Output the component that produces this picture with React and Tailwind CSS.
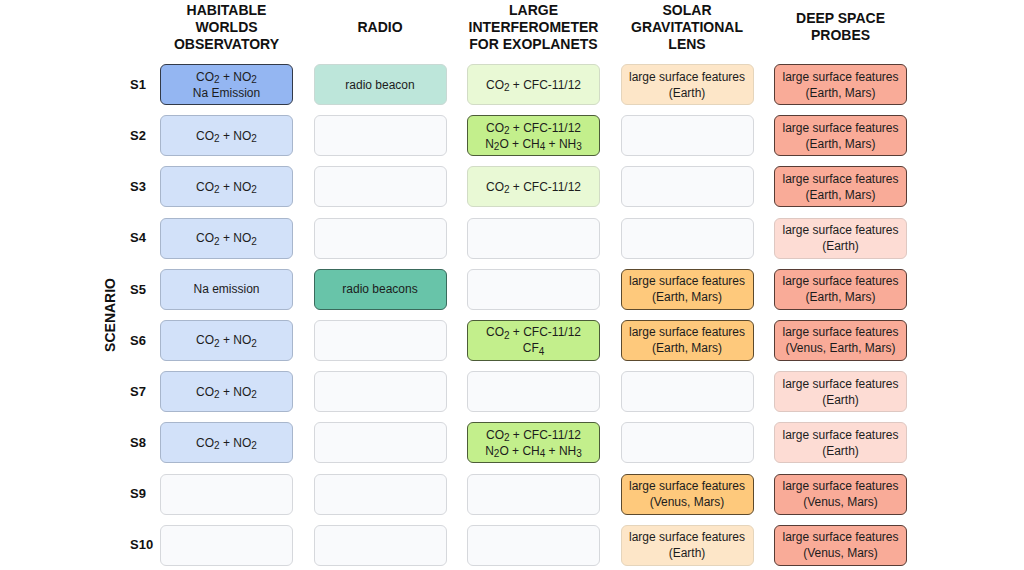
import React from 'react'

// paleta por columna: claro / fuerte / vacío
const estilos = {
  vacio: 'bg-[#f9fafc] border-[#d6d8dc]',
  hwoL: 'bg-[#d2e1f9] border-[#a8b6cc]',
  hwoF: 'bg-[#94b6f2] border-[#333a48]',
  radL: 'bg-[#bde6da] border-[#c9d9d4]',
  radF: 'bg-[#68c4a9] border-[#3a6a5c]',
  lifeL: 'bg-[#e9f9d5] border-[#d2dcc6]',
  lifeF: 'bg-[#c3ef8c] border-[#4c5c38]',
  sglL: 'bg-[#fde6c8] border-[#e5d5bc]',
  sglF: 'bg-[#fec97c] border-[#5c4a2e]',
  dspL: 'bg-[#fddcd4] border-[#dec8c2]',
  dspF: 'bg-[#f9ab98] border-[#573c35]',
}

const Sub = ({ children }) => <sub className="text-[10px]">{children}</sub>

const co2no2 = <>CO<Sub>2</Sub> + NO<Sub>2</Sub></>
const co2cfc = <>CO<Sub>2</Sub> + CFC-11/12</>
const n2o = <>N<Sub>2</Sub>O + CH<Sub>4</Sub> + NH<Sub>3</Sub></>
const lsf = 'large surface features'

const filas = [
  ['S1', [
    ['hwoF', [co2no2, 'Na Emission']],
    ['radL', ['radio beacon']],
    ['lifeL', [co2cfc]],
    ['sglL', [lsf, '(Earth)']],
    ['dspF', [lsf, '(Earth, Mars)']],
  ]],
  ['S2', [
    ['hwoL', [co2no2]],
    ['vacio', []],
    ['lifeF', [co2cfc, n2o]],
    ['vacio', []],
    ['dspF', [lsf, '(Earth, Mars)']],
  ]],
  ['S3', [
    ['hwoL', [co2no2]],
    ['vacio', []],
    ['lifeL', [co2cfc]],
    ['vacio', []],
    ['dspF', [lsf, '(Earth, Mars)']],
  ]],
  ['S4', [
    ['hwoL', [co2no2]],
    ['vacio', []],
    ['vacio', []],
    ['vacio', []],
    ['dspL', [lsf, '(Earth)']],
  ]],
  ['S5', [
    ['hwoL', ['Na emission']],
    ['radF', ['radio beacons']],
    ['vacio', []],
    ['sglF', [lsf, '(Earth, Mars)']],
    ['dspF', [lsf, '(Earth, Mars)']],
  ]],
  ['S6', [
    ['hwoL', [co2no2]],
    ['vacio', []],
    ['lifeF', [co2cfc, <>CF<Sub>4</Sub></>]],
    ['sglF', [lsf, '(Earth, Mars)']],
    ['dspF', [lsf, '(Venus, Earth, Mars)']],
  ]],
  ['S7', [
    ['hwoL', [co2no2]],
    ['vacio', []],
    ['vacio', []],
    ['vacio', []],
    ['dspL', [lsf, '(Earth)']],
  ]],
  ['S8', [
    ['hwoL', [co2no2]],
    ['vacio', []],
    ['lifeF', [co2cfc, n2o]],
    ['vacio', []],
    ['dspL', [lsf, '(Earth)']],
  ]],
  ['S9', [
    ['vacio', []],
    ['vacio', []],
    ['vacio', []],
    ['sglF', [lsf, '(Venus, Mars)']],
    ['dspF', [lsf, '(Venus, Mars)']],
  ]],
  ['S10', [
    ['vacio', []],
    ['vacio', []],
    ['vacio', []],
    ['sglL', [lsf, '(Earth)']],
    ['dspF', [lsf, '(Venus, Mars)']],
  ]],
]

const encabezados = [
  ['HABITABLE', 'WORLDS', 'OBSERVATORY'],
  ['RADIO'],
  ['LARGE', 'INTERFEROMETER', 'FOR EXOPLANETS'],
  ['SOLAR', 'GRAVITATIONAL', 'LENS'],
  ['DEEP SPACE', 'PROBES'],
]

function Caja({ tipo, lineas }) {
  return (
    <div className={`w-[133px] h-[41px] shrink-0 rounded-[6px] border flex flex-col items-center justify-center text-[12px] leading-[16px] text-[#1c1c1c] text-center ${estilos[tipo]}`}>
      {lineas.map((l, i) => <div key={i}>{l}</div>)}
    </div>
  )
}

export default function App() {
  return (
    <div className="w-[1024px] h-[570px] bg-white flex font-['Liberation_Sans',Arial,sans-serif] overflow-hidden">
      {/* etiqueta vertical */}
      <div className="w-[130px] shrink-0 pl-[101px] pt-[64px] flex">
        <div className="w-[18px] h-[502px] flex items-center justify-center">
          <span className="[writing-mode:vertical-rl] rotate-180 text-[14px] font-bold text-[#111] leading-none">SCENARIO</span>
        </div>
      </div>

      <div className="flex flex-col">
        {/* encabezados */}
        <div className="flex h-[54px] mb-[10px] pl-[30px] gap-[20.5px]">
          {encabezados.map((h, i) => (
            <div key={i} className="w-[133px] shrink-0 flex flex-col items-center justify-center text-[14px] leading-[17px] font-bold text-[#111] text-center whitespace-nowrap">
              {h.map(t => <div key={t}>{t}</div>)}
            </div>
          ))}
        </div>

        {/* filas */}
        <div className="flex flex-col gap-[10.2px]">
          {filas.map(([id, celdas]) => (
            <div key={id} className="flex items-center">
              <div className="w-[30px] shrink-0 text-[13px] font-bold text-[#111]">{id}</div>
              <div className="flex gap-[20.5px]">
                {celdas.map(([tipo, lineas], i) => <Caja key={i} tipo={tipo} lineas={lineas} />)}
              </div>
            </div>
          ))}
        </div>
      </div>
    </div>
  )
}
